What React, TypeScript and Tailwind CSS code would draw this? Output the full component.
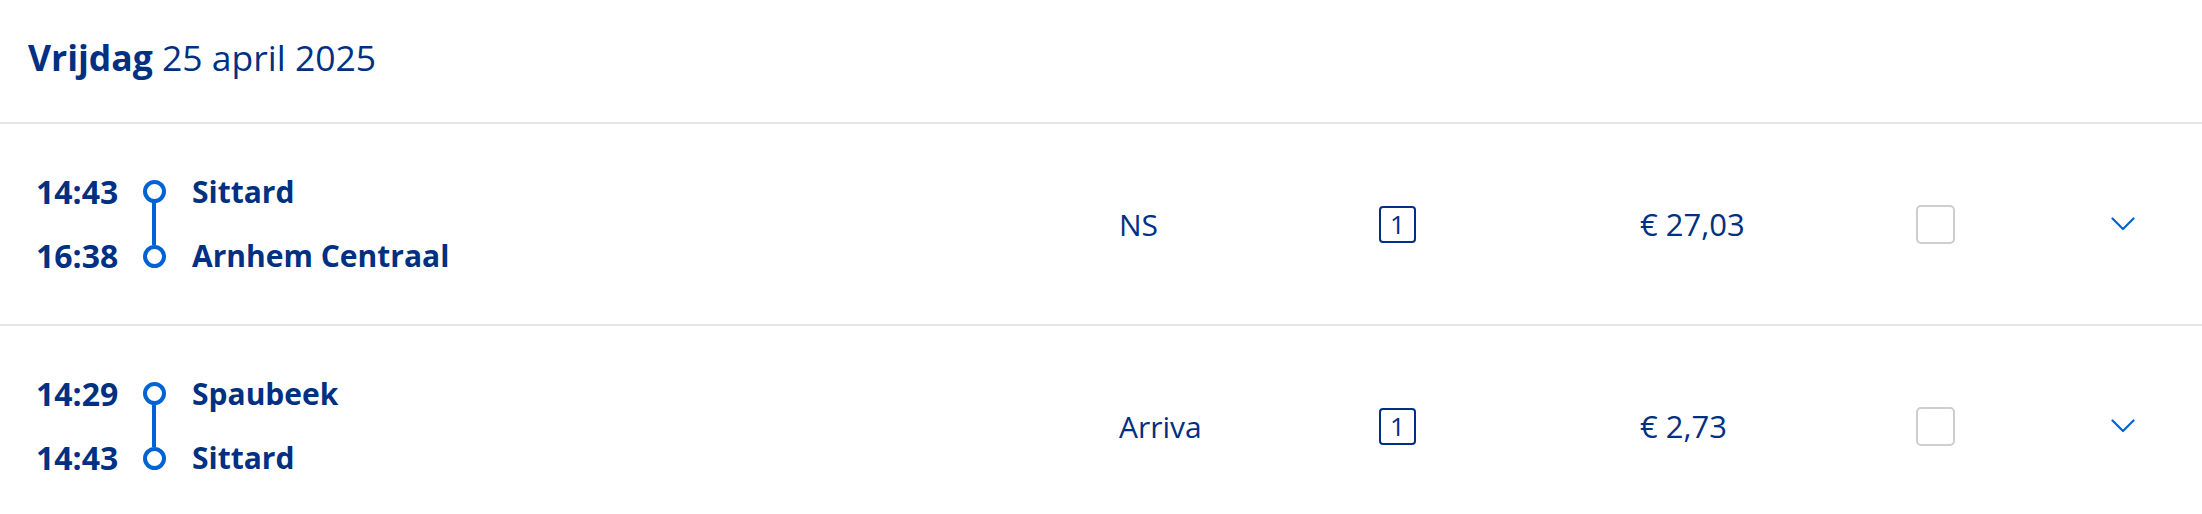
import React from "react";

interface Journey {
  id: number;
  departTime: string;
  departStation: string;
  arriveTime: string;
  arriveStation: string;
  operator: string;
  travelClass: number;
  price: string;
}

const journeys: Journey[] = [
  {
    id: 1,
    departTime: "14:43",
    departStation: "Sittard",
    arriveTime: "16:38",
    arriveStation: "Arnhem Centraal",
    operator: "NS",
    travelClass: 1,
    price: "€ 27,03",
  },
  {
    id: 2,
    departTime: "14:29",
    departStation: "Spaubeek",
    arriveTime: "14:43",
    arriveStation: "Sittard",
    operator: "Arriva",
    travelClass: 1,
    price: "€ 2,73",
  },
];

const ChevronDown = () => (
  <svg width="24" height="14" viewBox="0 0 24 14" fill="none">
    <polyline points="1.5,1.5 12,12 22.5,1.5" stroke="#0063d3" strokeWidth="2.2" strokeLinecap="round" strokeLinejoin="round" />
  </svg>
);

const JourneyRow = ({ journey }: { journey: Journey }) => {
  return (
    <div className="flex items-center h-[202px] border-b-2 border-[#e6e6e9]">
      {/* Times + stations */}
      <div className="flex w-[1119px] pl-[36px]">
        <div className="flex flex-col justify-between w-[106px] font-bold text-[32px] leading-[24px]">
          <span>{journey.departTime}</span>
          <span>{journey.arriveTime}</span>
        </div>
        <div className="flex flex-col items-center w-[24px]">
          <div className="w-[23px] h-[23px] rounded-full border-[4px] border-[#0063d3] bg-white" />
          <div className="w-[4px] h-[42px] bg-[#0063d3]" />
          <div className="w-[23px] h-[23px] rounded-full border-[4px] border-[#0063d3] bg-white" />
        </div>
        <div className="flex flex-col justify-between pl-[26px] font-bold text-[30px] leading-[24px]">
          <span>{journey.departStation}</span>
          <span>{journey.arriveStation}</span>
        </div>
      </div>

      {/* Operator */}
      <div className="w-[260px] text-[30px]">{journey.operator}</div>

      {/* Class */}
      <div className="w-[261px]">
        <div className="w-[37px] h-[37px] border-2 border-[#003082] rounded-[4px] flex items-center justify-center text-[26px] leading-none">
          {journey.travelClass}
        </div>
      </div>

      {/* Price */}
      <div className="w-[276px] text-[31px]">{journey.price}</div>

      {/* Checkbox */}
      <div className="flex-1">
        <div className="w-[39px] h-[39px] border-2 border-[#cdcdd2] rounded-[5px] bg-white" />
      </div>

      {/* Expand */}
      <div className="pr-[67px] flex items-center">
        <ChevronDown />
      </div>
    </div>
  );
};

export default function App() {
  return (
    <div
      className="w-[2202px] h-[514px] overflow-hidden bg-white text-[#003082]"
      style={{ fontFamily: '"Open Sans", "Noto Sans", sans-serif' }}
    >
      <div className="h-[124px] flex items-center px-[28px] border-b-2 border-[#e6e6e9]">
        <h2 className="text-[35.5px] pb-[6px]">
          <span className="font-bold">Vrijdag</span> 25 april 2025
        </h2>
      </div>
      {journeys.map((j) => (
        <JourneyRow key={j.id} journey={j} />
      ))}
    </div>
  );
}
